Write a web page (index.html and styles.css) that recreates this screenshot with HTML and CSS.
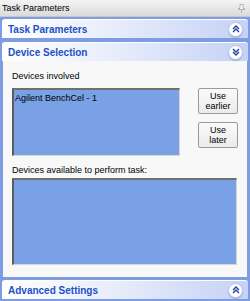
FILE: index.html
```html
<!DOCTYPE html>
<html lang="en">

<head>
    <meta charset="UTF-8">
    <title>Task Parameters</title>
    <link rel="stylesheet" href="styles.css">
</head>

<body>
    <div class="titlebar">
        <span>Task Parameters</span>
        <svg class="pin" width="7" height="9" viewBox="0 0 7 9">
            <path d="M2 0.5h3v4h1.5v1h-6v-1h1.5z" fill="#fff" stroke="#b0b0b0" stroke-width="1"/>
            <path d="M3.5 6v3" stroke="#b0b0b0" stroke-width="1"/>
        </svg>
    </div>

    <div class="pane">
        <div class="section-head">
            <span>Task Parameters</span>
            <span class="toggle">
                <svg width="8" height="8" viewBox="0 0 8 8">
                    <path d="M1 4L4 1L7 4M1 7L4 4L7 7" fill="none" stroke="#1f3fa8" stroke-width="1.4"/>
                </svg>
            </span>
        </div>

        <div class="section-head">
            <span>Device Selection</span>
            <span class="toggle">
                <svg width="8" height="8" viewBox="0 0 8 8">
                    <path d="M1 1L4 4L7 1M1 4L4 7L7 4" fill="none" stroke="#1f3fa8" stroke-width="1.4"/>
                </svg>
            </span>
        </div>
        <div class="section-body">
            <div class="label">Devices involved</div>
            <div class="involved-row">
                <div class="listbox involved">
                    <div class="item">Agilent BenchCel - 1</div>
                </div>
                <div class="buttons">
                    <button>Use<br>earlier</button>
                    <button>Use<br>later</button>
                </div>
            </div>
            <div class="label second">Devices available to perform task:</div>
            <div class="listbox available"></div>
        </div>

        <div class="section-head last">
            <span>Advanced Settings</span>
            <span class="toggle">
                <svg width="8" height="8" viewBox="0 0 8 8">
                    <path d="M1 4L4 1L7 4M1 7L4 4L7 7" fill="none" stroke="#1f3fa8" stroke-width="1.4"/>
                </svg>
            </span>
        </div>
    </div>
</body>

</html>
```

FILE: styles.css
```css
body {
    margin: 0;
    width: 250px;
    height: 301px;
    font-family: "Liberation Sans", Arial, sans-serif;
    font-size: 9px;
    background: #7d9ce4;
    overflow: hidden;
}

.titlebar {
    height: 17px;
    display: flex;
    align-items: center;
    justify-content: space-between;
    padding: 0 5px 0 2px;
    background: linear-gradient(#f4f4f4, #dadada);
    border-bottom: 1px solid #c8c8c8;
    color: #000;
    box-sizing: border-box;
}

.pin {
    display: block;
}

.pane {
    padding: 2px 2px 0 2px;
}

.section-head {
    height: 19px;
    display: flex;
    align-items: center;
    justify-content: space-between;
    padding: 0 5px 0 5px;
    margin-top: 0;
    border-radius: 3px 3px 0 0;
    border-top: 1px solid #fff;
    border-left: 1px solid #fff;
    background: linear-gradient(90deg, #ffffff 0%, #e8edfb 45%, #c5d2f6 100%);
    color: #2150c6;
    font-size: 10px;
    font-weight: bold;
    box-sizing: border-box;
}

.section-head + .section-head {
    margin-top: 4px;
}

.section-head.last {
    margin-top: 3px;
}

.toggle {
    width: 13px;
    height: 13px;
    border-radius: 50%;
    background: #fff;
    border: 1px solid #b9c4e2;
    display: flex;
    align-items: center;
    justify-content: center;
    box-shadow: 0 1px 1px rgba(80, 100, 160, 0.35);
}

.toggle svg {
    display: block;
}

.section-body {
    margin: 0 1px 0 1px;
    padding: 10px 8px 12px 9px;
    background: #f8f8f8;
    height: 216px;
    box-sizing: border-box;
}

.label {
    color: #000;
    line-height: 11px;
    height: 11px;
}

.label.second {
    margin-top: 9px;
}

.involved-row {
    display: flex;
    margin-top: 6px;
}

.listbox {
    background: #7aa0e6;
    border-top: 2px solid #707070;
    border-left: 2px solid #5c5c5c;
    border-right: 1px solid #d6d6d6;
    border-bottom: 1px solid #d6d6d6;
    box-sizing: border-box;
}

.listbox.involved {
    width: 168px;
    height: 68px;
}

.listbox.available {
    margin-top: 2px;
    width: 225px;
    height: 87px;
}

.item {
    color: #000;
    padding: 3px 0 0 1px;
    line-height: 11px;
}

.buttons {
    display: flex;
    flex-direction: column;
    gap: 8px;
    margin-left: 18px;
}

button {
    width: 40px;
    height: 26px;
    padding: 0;
    font-family: "Liberation Sans", Arial, sans-serif;
    font-size: 9px;
    line-height: 10px;
    color: #000;
    background: linear-gradient(#fafafa, #ebebeb);
    border: 1px solid #9a9a9a;
    border-radius: 2px;
}
```
